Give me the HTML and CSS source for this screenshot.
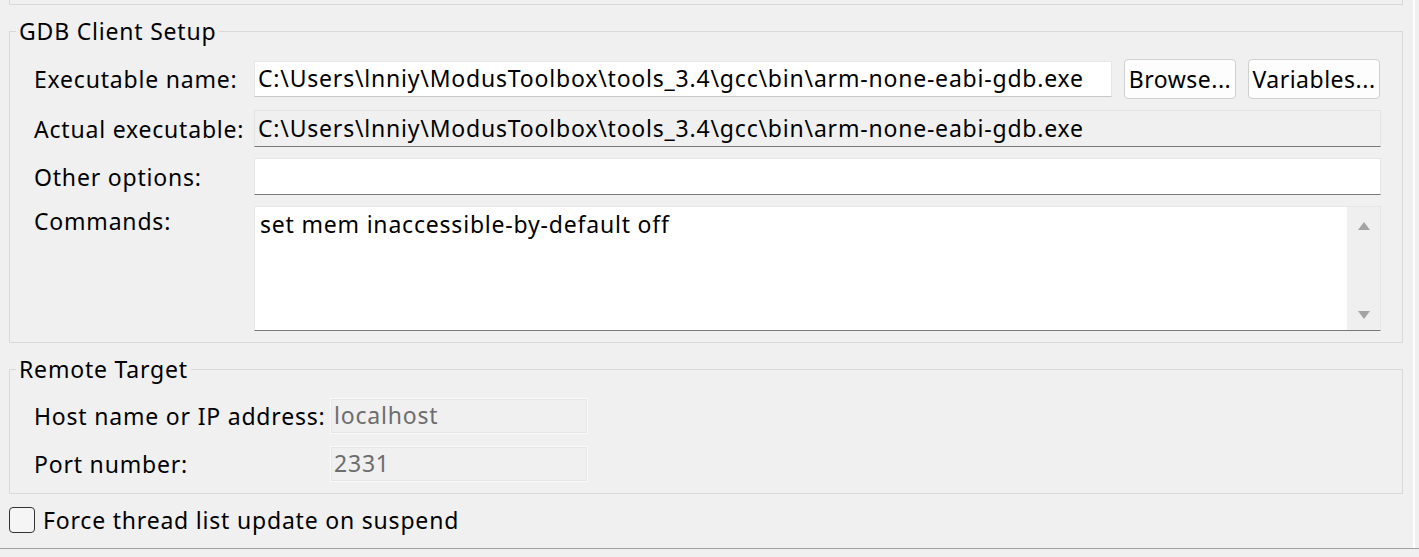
FILE: index.html
```html
<!DOCTYPE html>
<html>
<head>
<meta charset="utf-8">
<link rel="stylesheet" href="styles.css">
</head>
<body>
<div class="page">
  <div class="content">
    <div class="prev-group"></div>

    <fieldset class="group">
      <legend class="group-title">GDB Client Setup</legend>
      <div class="group-body">
        <div class="row row-buttons">
          <span class="label">Executable name:</span>
          <div class="field field-edit field-exe">C:\Users\lnniy\ModusToolbox\tools_3.4\gcc\bin\arm-none-eabi-gdb.exe</div>
          <button class="btn btn-browse">Browse...</button>
          <button class="btn btn-vars">Variables...</button>
        </div>
        <div class="row">
          <span class="label">Actual executable:</span>
          <div class="field field-readonly">C:\Users\lnniy\ModusToolbox\tools_3.4\gcc\bin\arm-none-eabi-gdb.exe</div>
        </div>
        <div class="row">
          <span class="label">Other options:</span>
          <div class="field field-edit"></div>
        </div>
        <div class="row row-top">
          <span class="label">Commands:</span>
          <div class="textarea">
            <div class="textarea-text">set mem inaccessible-by-default off</div>
            <div class="vscroll">
              <span class="arrow arrow-up"></span>
              <span class="arrow arrow-down"></span>
            </div>
          </div>
        </div>
      </div>
    </fieldset>

    <fieldset class="group group-remote">
      <legend class="group-title">Remote Target</legend>
      <div class="group-body remote-body">
        <div class="row">
          <span class="label label-wide">Host name or IP address:</span>
          <div class="field field-disabled">localhost</div>
        </div>
        <div class="row">
          <span class="label label-wide">Port number:</span>
          <div class="field field-disabled">2331</div>
        </div>
      </div>
    </fieldset>

    <label class="check-row">
      <span class="checkbox"></span>
      <span class="check-label">Force thread list update on suspend</span>
    </label>
  </div>
</div>
<div class="bottom-rule"></div>
</body>
</html>
```

FILE: styles.css
```css
html, body {
  margin: 0;
  padding: 0;
  background: #f0f0f0;
}

body {
  font-family: "Noto Sans", "Open Sans", sans-serif;
  font-size: 23px;
  letter-spacing: 0.8px;
  color: #000;
  width: 1419px;
  height: 557px;
  overflow: hidden;
}

.page {
  height: 548px;
  display: flex;
}

.content {
  width: 1394px;
  padding-left: 9px;
  padding-right: 10px;
  border-right: 2px solid #ffffff;
  display: flex;
  flex-direction: column;
}

.prev-group {
  height: 4px;
  border: 1px solid #d9d9d9;
  border-top: none;
  margin-bottom: 11px;
}

.group {
  margin: 0 0 11px 0;
  padding: 0;
  border: 1px solid #d9d9d9;
  min-width: 0;
}

.group-title {
  margin-left: 6px;
  padding: 0 3px;
  line-height: 30px;
  height: 30px;
}

.group-body {
  padding: 13px 21px 11px 24px;
  display: flex;
  flex-direction: column;
  gap: 11px;
}

.remote-body {
  padding-bottom: 11px;
  gap: 11px;
}

.row {
  display: flex;
  align-items: center;
  min-height: 37px;
}

.row-buttons {
  min-height: 40px;
}

.row-top {
  align-items: flex-start;
}

.label {
  width: 220px;
  flex: none;
  line-height: 30px;
  white-space: nowrap;
}

.label-wide {
  width: 296px;
}

.field {
  box-sizing: border-box;
  height: 37px;
  line-height: 34px;
  padding: 0 3px;
  white-space: nowrap;
  overflow: hidden;
  flex: 1;
}

.field-edit {
  background: #ffffff;
  border: 1px solid #e6e6e6;
  border-bottom: 1px solid #7a7a7a;
}

.field-exe {
  flex: none;
  width: 858px;
  height: 36px;
  line-height: 33px;
  border-bottom-color: #c8c8c8;
}

.field-readonly {
  background: #f0f0f0;
  border: 1px solid #e3e3e3;
  border-bottom: 1px solid #7a7a7a;
}

.field-disabled {
  flex: none;
  width: 258px;
  height: 36px;
  line-height: 33px;
  background: #f0f0f0;
  border: 1px solid #fafafa;
  outline: 1px solid #e6e6e6;
  outline-offset: -2px;
  color: #6d6d6d;
}

.btn {
  box-sizing: border-box;
  height: 40px;
  font: inherit;
  letter-spacing: 0.5px;
  color: #000;
  background: #fdfdfd;
  border: 1px solid #d0d0d0;
  border-radius: 4px;
  padding: 0 2px;
  line-height: 36px;
  flex: none;
  white-space: nowrap;
}

.btn-browse {
  width: 112px;
  margin-left: 12px;
}

.btn-vars {
  width: 132px;
  margin-left: 12px;
}

.textarea {
  box-sizing: border-box;
  flex: 1;
  height: 125px;
  display: flex;
  background: #ffffff;
  border: 1px solid #e6e6e6;
  border-bottom: 1px solid #7a7a7a;
}

.textarea-text {
  flex: 1;
  padding: 2px 5px;
  line-height: 30px;
}

.vscroll {
  width: 33px;
  background: #efefef;
  display: flex;
  flex-direction: column;
  justify-content: space-between;
  align-items: center;
  padding: 15px 0 11px;
}

.arrow {
  width: 0;
  height: 0;
  border-left: 6px solid transparent;
  border-right: 6px solid transparent;
}

.arrow-up {
  border-bottom: 8px solid #a3a3a3;
}

.arrow-down {
  border-top: 8px solid #a3a3a3;
}

.check-row {
  display: flex;
  align-items: center;
  gap: 8px;
  margin-top: 0;
}

.checkbox {
  box-sizing: border-box;
  width: 26px;
  height: 26px;
  border: 1.5px solid #333333;
  border-radius: 4px;
  background: #f5f5f5;
  flex: none;
}

.check-label {
  line-height: 30px;
}

.bottom-rule {
  height: 1px;
  background: #a0a0a0;
  width: 1419px;
}
```
